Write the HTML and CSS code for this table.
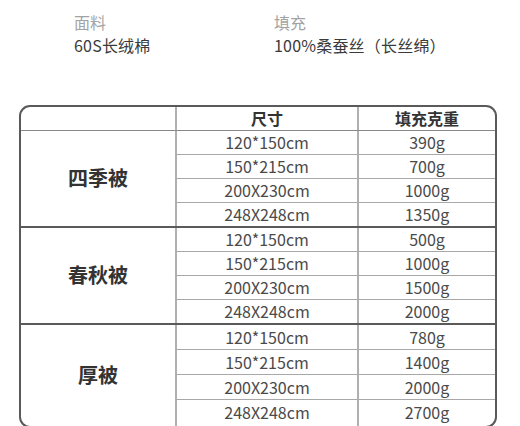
FILE: index.html
```html
<!DOCTYPE html>
<html lang="zh">
<head>
<meta charset="utf-8">
<link rel="stylesheet" href="styles.css">
</head>
<body>
<div class="info">
  <div class="info-item">
    <div class="info-label">面料</div>
    <div class="info-value">60S长绒棉</div>
  </div>
  <div class="info-item">
    <div class="info-label">填充</div>
    <div class="info-value">100%桑蚕丝（长丝绵）</div>
  </div>
</div>

<div class="spec">
  <div class="row head">
    <div class="cell c1"></div>
    <div class="cell c2">尺寸</div>
    <div class="cell c3">填充克重</div>
  </div>

  <div class="group">
    <div class="label">四季被</div>
    <div class="cell c2">120*150cm</div><div class="cell c3">390g</div>
    <div class="cell c2">150*215cm</div><div class="cell c3">700g</div>
    <div class="cell c2">200X230cm</div><div class="cell c3">1000g</div>
    <div class="cell c2 last">248X248cm</div><div class="cell c3 last">1350g</div>
  </div>

  <div class="group">
    <div class="label">春秋被</div>
    <div class="cell c2">120*150cm</div><div class="cell c3">500g</div>
    <div class="cell c2">150*215cm</div><div class="cell c3">1000g</div>
    <div class="cell c2">200X230cm</div><div class="cell c3">1500g</div>
    <div class="cell c2 last">248X248cm</div><div class="cell c3 last">2000g</div>
  </div>

  <div class="group tall">
    <div class="label">厚被</div>
    <div class="cell c2">120*150cm</div><div class="cell c3">780g</div>
    <div class="cell c2">150*215cm</div><div class="cell c3">1400g</div>
    <div class="cell c2">200X230cm</div><div class="cell c3">2000g</div>
    <div class="cell c2 last">248X248cm</div><div class="cell c3 last">2700g</div>
  </div>
</div>
</body>
</html>
```

FILE: styles.css
```css
html, body {
  margin: 0;
  padding: 0;
  background: #ffffff;
}

body {
  font-family: "Noto Sans CJK SC", "Noto Sans", sans-serif;
  color: #444;
  overflow: hidden;
}

.info {
  display: flex;
  padding: 11px 0 0 74px;
}

.info-item {
  width: 200px;
  font-size: 16px;
  line-height: 23px;
}

.info-label {
  color: #a3a3a3;
}

.info-value {
  color: #3a3a3a;
  letter-spacing: 0.2px;
}

.spec {
  margin: 48px 0 0 19px;
  width: 478px;
  box-sizing: border-box;
  border: 2px solid #5a5a5a;
  border-radius: 11px;
  overflow: hidden;
}

.row {
  display: grid;
  grid-template-columns: 154px 182px 1fr;
}

.head {
  height: 24px;
  border-bottom: 1px solid #888;
  box-sizing: border-box;
}

.head .cell {
  font-size: 16px;
  font-weight: 700;
  color: #333;
  border-bottom: none;
  height: 23px;
  line-height: 23px;
}

.cell {
  text-align: center;
  font-size: 16px;
  color: #4a4a4a;
  height: 24px;
  line-height: 23px;
  box-sizing: border-box;
  border-bottom: 1px solid #a8a8a8;
}

.cell.c2 {
  border-left: 2px solid #b0b0b0;
}

.cell.c3 {
  border-left: 2px solid #b0b0b0;
}

.cell.last {
  border-bottom: none;
  height: 23px;
}

.group {
  display: grid;
  grid-template-columns: 154px 182px 1fr;
  grid-template-rows: repeat(4, auto);
  border-top: 2px solid #5a5a5a;
}

.head + .group {
  border-top: none;
}

.label {
  grid-row: 1 / span 4;
  grid-column: 1;
  display: flex;
  align-items: center;
  justify-content: center;
  font-size: 20px;
  font-weight: 700;
  color: #333;
  padding-bottom: 2px;
}

.tall .cell {
  height: 25px;
  line-height: 24px;
}

.tall .cell.last {
  height: 26px;
}
```
